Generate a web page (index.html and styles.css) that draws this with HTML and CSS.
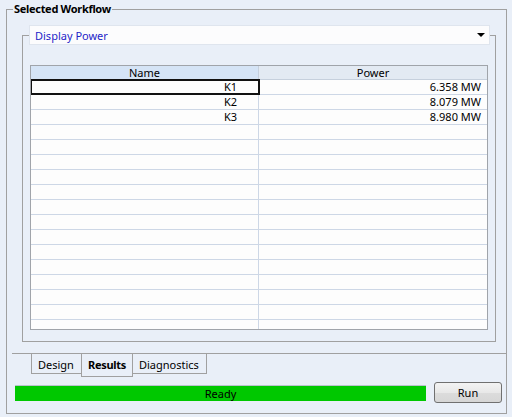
FILE: index.html
```html
<!DOCTYPE html>
<html>
<head>
<meta charset="utf-8">
<link rel="stylesheet" href="styles.css">
</head>
<body>
<fieldset class="outer">
  <legend class="outer-title">Selected Workflow</legend>
  <fieldset class="inner">
    <legend class="combo">
      <span class="combo-text">Display Power</span>
      <svg class="combo-arrow" width="8" height="4" viewBox="0 0 8 4"><polygon points="0,0 8,0 4,4" fill="#000"/></svg>
    </legend>
    <div class="grid">
      <div class="row head">
        <div class="cell c1 sel">Name</div>
        <div class="cell c2">Power</div>
      </div>
      <div class="row"><div class="cell c1 focus">K1</div><div class="cell c2">6.358 MW</div></div>
      <div class="row"><div class="cell c1">K2</div><div class="cell c2">8.079 MW</div></div>
      <div class="row"><div class="cell c1">K3</div><div class="cell c2">8.980 MW</div></div>
      <div class="row"><div class="cell c1"></div><div class="cell c2"></div></div>
      <div class="row"><div class="cell c1"></div><div class="cell c2"></div></div>
      <div class="row"><div class="cell c1"></div><div class="cell c2"></div></div>
      <div class="row"><div class="cell c1"></div><div class="cell c2"></div></div>
      <div class="row"><div class="cell c1"></div><div class="cell c2"></div></div>
      <div class="row"><div class="cell c1"></div><div class="cell c2"></div></div>
      <div class="row"><div class="cell c1"></div><div class="cell c2"></div></div>
      <div class="row"><div class="cell c1"></div><div class="cell c2"></div></div>
      <div class="row"><div class="cell c1"></div><div class="cell c2"></div></div>
      <div class="row"><div class="cell c1"></div><div class="cell c2"></div></div>
      <div class="row"><div class="cell c1"></div><div class="cell c2"></div></div>
      <div class="row"><div class="cell c1"></div><div class="cell c2"></div></div>
      <div class="row"><div class="cell c1"></div><div class="cell c2"></div></div>
      <div class="row"><div class="cell c1"></div><div class="cell c2"></div></div>
    </div>
  </fieldset>
  <div class="tabstrip">
    <div class="tab">Design</div>
    <div class="tab active">Results</div>
    <div class="tab">Diagnostics</div>
  </div>
  <div class="status">
    <div class="progress">Ready</div>
    <div class="run">Run</div>
  </div>
</fieldset>
</body>
</html>
```

FILE: styles.css
```css
* { box-sizing: border-box; }
html, body { margin: 0; padding: 0; }
body {
  background: #e9eff8;
  font-family: "Noto Sans", "Open Sans", sans-serif;
  font-size: 11px;
  color: #000;
  width: 512px;
  height: 417px;
  overflow: hidden;
}
.outer {
  margin: 0 0 0 6px;
  padding: 0;
  width: 501px;
  height: 414px;
  border: 1px solid #a0a0a0;
  min-width: 0;
}
.outer-title {
  margin-left: 6px;
  padding: 0 1px;
  font-weight: bold;
  line-height: 17px;
  height: 18px;
  letter-spacing: -0.3px;
}
.inner {
  margin: 7px 0 0 15px;
  padding: 0;
  width: 474px;
  height: 317px;
  border: 1px solid #a0a0a0;
  min-width: 0;
}
.combo {
  margin-left: 6px;
  width: 461px;
  height: 20px;
  background: #fcfcfd;
  border: 1px solid #dfe5ee;
  display: flex;
  align-items: center;
  justify-content: space-between;
  padding: 0 4px 0 5px;
}
.combo-text { color: #1f1fc8; }
.combo-arrow { display: block; }
.grid {
  margin: 20px 7px 0 7px;
  width: 458px;
  height: 265px;
  border: 1px solid #a0a4aa;
  background: #fdfdfd;
  overflow: hidden;
}
.row {
  display: flex;
  height: 15px;
  border-bottom: 1px solid #cdd7e6;
}
.cell {
  height: 100%;
  line-height: 14px;
  text-align: right;
  white-space: nowrap;
}
.c1 { width: 228px; border-right: 1px solid #cdd7e6; padding-right: 21px; }
.c2 { width: 228px; padding-right: 6px; }
.head { height: 14px; border-bottom: 1px solid #c6d0dd; }
.head .cell { text-align: center; padding: 0; line-height: 13px; background: #e3eaf3; }
.head .c1 { background: #d5e4f6; border-right: 1px solid #c6d0dd; }
.focus { outline: 2px solid #111; outline-offset: -1px; }
.tabstrip {
  margin: 11px 0 0 5px;
  width: 494px;
  border-top: 1px solid #a0a0a0;
  display: flex;
  align-items: flex-start;
  padding-left: 19px;
}
.tab {
  height: 20px;
  border: 1px solid #a0a0a0;
  border-top: none;
  padding: 0 6px;
  line-height: 21px;
  margin-left: -1px;
}
.tab:first-child { margin-left: 0; width: 51px; }
.tab.active { height: 23px; font-weight: bold; width: 52px; line-height: 21px; letter-spacing: -0.3px; }
.tab:last-child { width: 75px; }
.status {
  display: flex;
  align-items: center;
  margin: 5px 0 0 8px;
  gap: 8px;
}
.progress {
  width: 411px;
  height: 16px;
  background: #00c800;
  border-top: 1px solid #b9c3cc;
  text-align: center;
  line-height: 15px;
}
.run {
  width: 68px;
  height: 21px;
  border: 1px solid #707070;
  border-radius: 3px;
  background: linear-gradient(#f3f3f3, #e8e8e8 50%, #dcdcdc 51%, #d6d6d6);
  text-align: center;
  line-height: 19px;
}
```
